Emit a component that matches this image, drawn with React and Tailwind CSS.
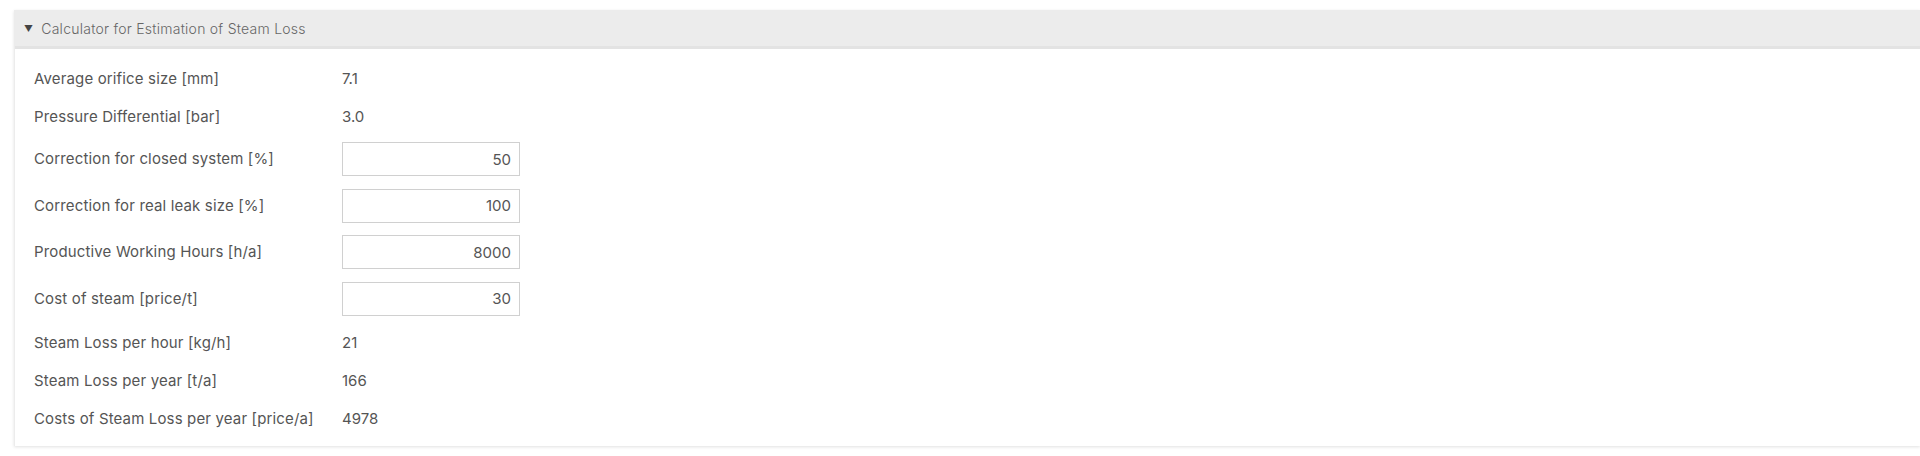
import React, { useState } from "react";

const rows = [
  { label: "Average orifice size [mm]", value: "7.1" },
  { label: "Pressure Differential [bar]", value: "3.0" },
  { label: "Correction for closed system [%]", input: "50" },
  { label: "Correction for real leak size [%]", input: "100" },
  { label: "Productive Working Hours [h/a]", input: "8000" },
  { label: "Cost of steam [price/t]", input: "30" },
  { label: "Steam Loss per hour [kg/h]", value: "21", gap: true },
  { label: "Steam Loss per year [t/a]", value: "166" },
  { label: "Costs of Steam Loss per year [price/a]", value: "4978" },
];

export default function App() {
  const [open, setOpen] = useState(true);

  return (
    <div className="min-h-[456px] bg-white pt-[10px] pl-[14px] font-['Inter','Liberation_Sans',sans-serif] text-[#555]">
      <div className="border-l border-[#ececec] bg-white shadow-[0_1px_3px_rgba(0,0,0,0.12)]">
        {/* header */}
        <button
          onClick={() => setOpen(!open)}
          className="flex h-[39px] w-full items-center border-b-[3px] border-[#e3e3e3] bg-[#ececec] pl-[9px] text-left text-[14px] font-light tracking-[0.25px] text-[#666]"
        >
          <span className="mr-[8px] text-[9px] leading-none text-[#444]">▼</span>
          Calculator for Estimation of Steam Loss
        </button>

        {open && (
          <div className="pt-[11px] pb-[8px] pl-[19px]">
            {rows.map((row) => (
              <div
                key={row.label}
                className={`flex items-center text-[15px] ${row.input ? "h-[46.5px]" : "h-[38px]"} ${row.gap ? "mt-[2px]" : ""}`}
              >
                <div className="w-[308px] shrink-0 tracking-[0.15px]">{row.label}</div>
                {row.input ? (
                  <input
                    type="text"
                    defaultValue={row.input}
                    className="h-[34px] w-[178px] border border-[#d0d0d0] bg-white pr-[8px] text-right text-[15px] text-[#555] outline-none"
                  />
                ) : (
                  <div>{row.value}</div>
                )}
              </div>
            ))}
          </div>
        )}
      </div>
    </div>
  );
}
